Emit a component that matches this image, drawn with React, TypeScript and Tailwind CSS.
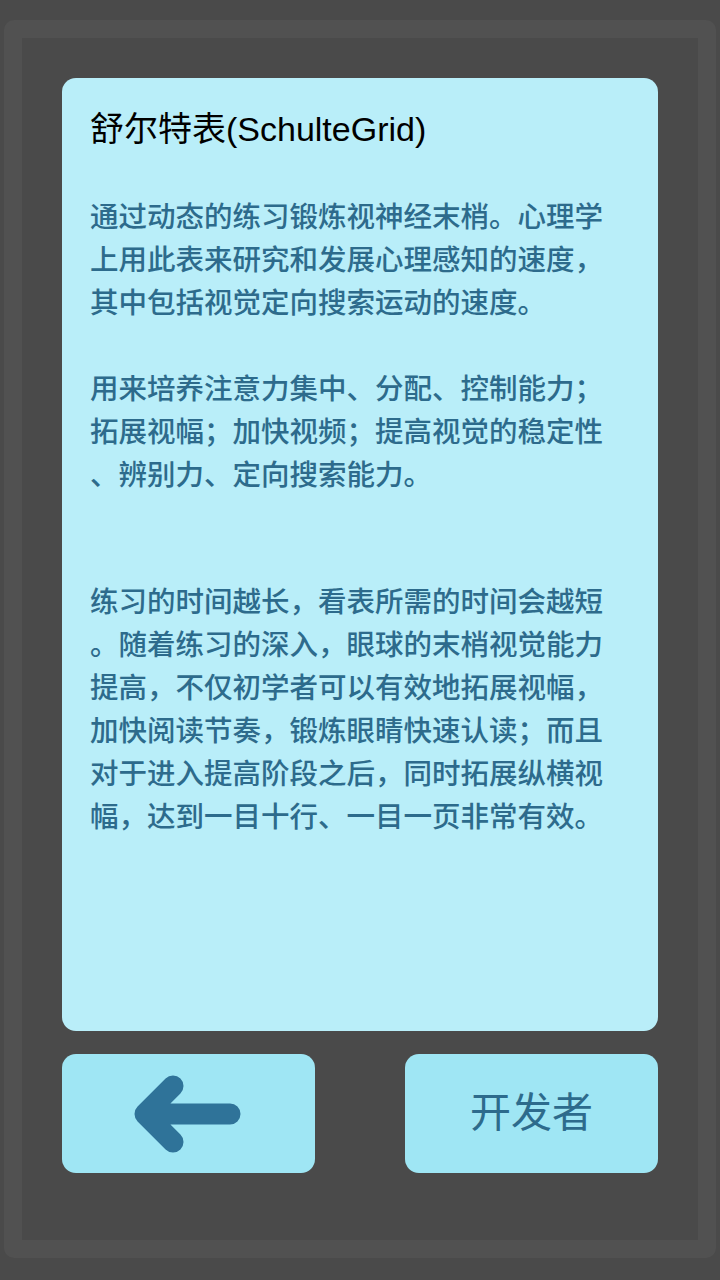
const paragraphs: string[][] = [
  [
    '通过动态的练习锻炼视神经末梢。心理学',
    '上用此表来研究和发展心理感知的速度，',
    '其中包括视觉定向搜索运动的速度。',
  ],
  [
    '用来培养注意力集中、分配、控制能力；',
    '拓展视幅；加快视频；提高视觉的稳定性',
    '、辨别力、定向搜索能力。',
  ],
  [
    '练习的时间越长，看表所需的时间会越短',
    '。随着练习的深入，眼球的末梢视觉能力',
    '提高，不仅初学者可以有效地拓展视幅，',
    '加快阅读节奏，锻炼眼睛快速认读；而且',
    '对于进入提高阶段之后，同时拓展纵横视',
    '幅，达到一目十行、一目一页非常有效。',
  ],
];

const font = { fontFamily: '"Liberation Sans", "Noto Sans CJK SC", sans-serif' };

function BackArrow() {
  return (
    <svg width="120" height="90" viewBox="0 0 120 90" fill="none">
      <path
        d="M16 45 H101 M16 45 L44 17 M16 45 L44 73"
        stroke="#2f7399"
        strokeWidth="21"
        strokeLinecap="round"
        strokeLinejoin="round"
      />
    </svg>
  );
}

export default function App() {
  return (
    <div
      className="w-[720px] h-[1280px] bg-[#4a4a4a] pt-[20px] px-[4px] pb-[22px]"
      style={font}
    >
      <div className="h-full border-[18px] border-[#515151] rounded-[10px] px-[40px] pt-[40px] pb-[67px] flex flex-col gap-[23px]">
        {/* Description card */}
        <div className="h-[953px] bg-[#b9eef9] rounded-[14px] pl-[28px] pt-[30px]">
          <div className="text-[34px] leading-[43px] text-black whitespace-nowrap">
            舒尔特表(SchulteGrid)
          </div>
          <div className="h-[45px]" />
          <div className="flex flex-col text-[28.5px] leading-[43px] font-medium text-[#2d6b8c] whitespace-nowrap">
            {paragraphs.map((lines, i) => (
              <div key={i} className={i === 1 ? 'mb-[84px]' : 'mb-[43px]'}>
                {lines.map(line => (
                  <div key={line}>{line}</div>
                ))}
              </div>
            ))}
          </div>
        </div>

        {/* Bottom buttons */}
        <div className="h-[119px] flex justify-between">
          <button
            type="button"
            className="w-[253px] h-full bg-[#9fe6f4] rounded-[14px] flex items-center justify-center"
          >
            <BackArrow />
          </button>
          <button
            type="button"
            className="w-[253px] h-full bg-[#9fe6f4] rounded-[14px] flex items-center justify-center text-[41px] text-[#2d6b8c]"
          >
            开发者
          </button>
        </div>
      </div>
    </div>
  );
}
